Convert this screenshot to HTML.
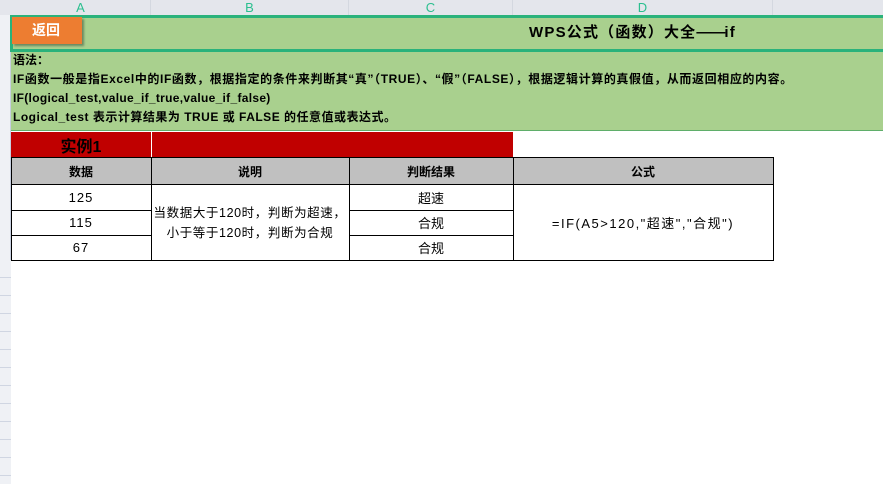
<!DOCTYPE html>
<html><head><meta charset="utf-8"><style>
*{margin:0;padding:0;box-sizing:border-box}
body{width:883px;height:484px;background:#fff;position:relative;overflow:hidden;font-family:"Liberation Sans","Noto Sans CJK SC",sans-serif;color:#000}
.a{position:absolute}
.colh{top:0;height:15px;background:#e4e6ec;color:#2bbf8f;font-size:13px;line-height:15px;text-align:center;border-right:1px solid #d4d8e0}
.t{font-size:12px;font-weight:bold;white-space:nowrap;left:13px}
.c{position:absolute;text-align:center;font-size:13px;display:flex;align-items:center;justify-content:center;white-space:nowrap}
</style></head><body>
<div class="a" style="left:0;top:0;width:11px;height:484px;background:#eff1f5;border-right:1px solid #c8d0e0"></div>
<div class="a" style="left:0;top:0;width:11px;height:15px;background:#e4e6ec"></div>
<div class="a colh" style="left:11px;width:140px">A</div>
<div class="a colh" style="left:151px;width:198px">B</div>
<div class="a colh" style="left:349px;width:164px">C</div>
<div class="a colh" style="left:513px;width:260px">D</div>
<div class="a colh" style="left:773px;width:110px;border:none"></div>
<div class="a" style="left:0;top:260px;width:11px;height:224px;background:repeating-linear-gradient(#eff1f5 0,#eff1f5 17px,#d0d6e2 17px,#d0d6e2 18px)"></div>
<div class="a" style="left:11px;top:15px;width:872px;height:116px;background:#a9d08e;border-bottom:1px solid #5fae6a"></div>
<div class="a" style="left:10px;top:15px;width:873px;height:37px;border:3px solid #2ab27b;border-right:none"></div>
<div class="a" style="left:12px;top:17px;width:70px;height:27px;background:#ed7d31;box-shadow:2px 2px 2px #6a8a60;color:#fff;font-weight:bold;font-size:14px;line-height:27px;padding-left:20px;font-family:'Noto Sans CJK SC',sans-serif">返回</div>
<div class="a" style="left:529px;top:22px;font-size:15px;font-weight:bold;white-space:nowrap;line-height:22px;letter-spacing:1.2px">WPS公式（函数）大全<span style="letter-spacing:-1px">——</span>if</div>
<div class="a t" style="top:52px;line-height:16px">语法：</div>
<div class="a t" style="top:71px;line-height:16px;letter-spacing:0.6px">IF函数一般是指Excel中的IF函数，根据指定的条件来判断其“真”（TRUE）、“假”（FALSE），根据逻辑计算的真假值，从而返回相应的内容。</div>
<div class="a t" style="top:90px;line-height:16px;letter-spacing:0.3px">IF(logical_test,value_if_true,value_if_false)</div>
<div class="a t" style="top:109px;line-height:16px;letter-spacing:0.5px">Logical_test 表示计算结果为 TRUE 或 FALSE 的任意值或表达式。</div>
<div class="a" style="left:11px;top:132px;width:502px;height:25px;background:#c00000"></div>
<div class="a" style="left:151px;top:132px;width:1px;height:25px;background:#fff"></div>
<div class="c" style="left:11px;top:132px;width:140px;height:25px;font-size:16px;font-weight:bold">实例1</div>
<div class="a" style="left:11px;top:157px;width:763px;height:104px;border:1px solid #000"></div>
<div class="a" style="left:11px;top:157px;width:763px;height:28px;background:#c0c0c0;border:1px solid #000"></div>
<div class="c" style="left:11px;top:157px;width:140px;height:28px;font-weight:bold;font-size:12px">数据</div>
<div class="c" style="left:151px;top:157px;width:198px;height:28px;font-weight:bold;font-size:12px">说明</div>
<div class="c" style="left:349px;top:157px;width:164px;height:28px;font-weight:bold;font-size:12px">判断结果</div>
<div class="c" style="left:513px;top:157px;width:260px;height:28px;font-weight:bold;font-size:12px">公式</div>
<div class="a" style="left:151px;top:157px;width:1px;height:104px;background:#000"></div>
<div class="a" style="left:349px;top:157px;width:1px;height:104px;background:#000"></div>
<div class="a" style="left:513px;top:157px;width:1px;height:104px;background:#000"></div>
<div class="a" style="left:11px;top:210px;width:140px;height:1px;background:#000"></div>
<div class="a" style="left:11px;top:235px;width:140px;height:1px;background:#000"></div>
<div class="a" style="left:349px;top:210px;width:164px;height:1px;background:#000"></div>
<div class="a" style="left:349px;top:235px;width:164px;height:1px;background:#000"></div>
<div class="c" style="left:11px;top:185px;width:140px;height:25px;letter-spacing:1px">125</div>
<div class="c" style="left:11px;top:210px;width:140px;height:25px;letter-spacing:1px">115</div>
<div class="c" style="left:11px;top:235px;width:140px;height:25px;letter-spacing:1px">67</div>
<div class="c" style="left:151px;top:185px;width:198px;height:75px;font-size:12.5px;line-height:20px;flex-direction:column;letter-spacing:0.6px">当数据大于120时，判断为超速，<br>小于等于120时，判断为合规</div>
<div class="c" style="left:349px;top:185px;width:164px;height:25px">超速</div>
<div class="c" style="left:349px;top:210px;width:164px;height:25px">合规</div>
<div class="c" style="left:349px;top:235px;width:164px;height:25px">合规</div>
<div class="c" style="left:513px;top:185px;width:260px;height:75px;letter-spacing:1.5px">=IF(A5&gt;120,"超速","合规")</div>
</body></html>
